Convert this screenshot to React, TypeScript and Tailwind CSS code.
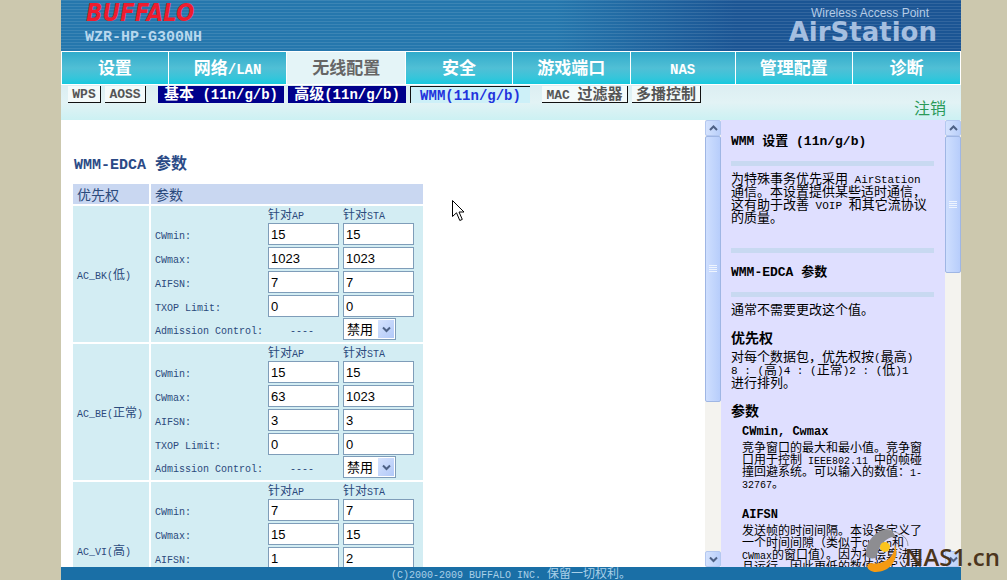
import React from "react";

const cjk = "font-['Noto_Sans_CJK_SC',sans-serif]";
const mono = "font-['Liberation_Mono','Noto_Sans_CJK_SC',monospace] leading-[0]";

function Mixed({ text, latin }: { text: string; latin: string }) {
  return (
    <>
      {text.split(/([\x20-\x7e]+)/).map((part, i) =>
        i % 2 === 1 ? (
          <span key={i} className={`${mono} ${latin} whitespace-pre`}>
            {part}
          </span>
        ) : (
          part
        ),
      )}
    </>
  );
}

function Lines({ lines, latin, className }: { lines: string[]; latin: string; className: string }) {
  return (
    <p className={`whitespace-nowrap ${className}`}>
      {lines.map((line) => (
        <span key={line} className="block">
          <Mixed text={line} latin={latin} />
        </span>
      ))}
    </p>
  );
}

const navItems = ["设置", "网络/LAN", "无线配置", "安全", "游戏端口", "NAS", "管理配置", "诊断"];

const plainTab =
  "border-b border-r border-[#111] bg-[#f4fafa] text-[#555]";
const navyTab = "bg-[#00008b] text-white";
const currentTab = "border-l border-t border-[#111] bg-[#cdf0f8] text-[#2233dd]";

const subTabs = [
  { text: "WPS", className: `w-[33px] text-[13px] ${plainTab}`, latin: "text-[13px]" },
  { text: "AOSS", className: `ml-1 w-[41px] text-[13px] ${plainTab}`, latin: "text-[13px]" },
  { text: "基本 (11n/g/b)", className: `ml-3 w-[126px] text-[15px] ${navyTab}`, latin: "text-[14px]" },
  { text: "高级(11n/g/b)", className: `ml-1 w-[118px] text-[15px] ${navyTab}`, latin: "text-[14px]" },
  { text: "WMM(11n/g/b)", className: `ml-1 w-[120px] text-[15px] ${currentTab}`, latin: "text-[14px]" },
  { text: "MAC 过滤器", className: `ml-3 w-[86px] text-[15px] ${plainTab}`, latin: "text-[13px]" },
  { text: "多播控制", className: `ml-1 w-[69px] text-[15px] ${plainTab}`, latin: "text-[13px]" },
];

const categories = [
  { id: "bk", name: "AC_BK(低)", rows: [["15", "15"], ["1023", "1023"], ["7", "7"], ["0", "0"]] },
  { id: "be", name: "AC_BE(正常)", rows: [["15", "15"], ["63", "1023"], ["3", "3"], ["0", "0"]] },
  { id: "vi", name: "AC_VI(高)", rows: [["7", "7"], ["15", "15"], ["1", "2"], ["0", "0"]] },
];
const params = ["CWmin:", "CWmax:", "AIFSN:", "TXOP Limit:"];

function Chevron({ up = false }: { up?: boolean }) {
  return (
    <svg width="9" height="7" viewBox="0 0 9 7" aria-hidden="true">
      <path
        d={up ? "M1 5 L4.5 1.5 L8 5" : "M1 1.5 L4.5 5 L8 1.5"}
        fill="none"
        stroke="#4d6185"
        strokeWidth="2"
      />
    </svg>
  );
}

function ScrollBar({ thumb }: { thumb: string }) {
  const end =
    "flex h-4 w-full shrink-0 items-center justify-center rounded-xs border border-[#b4c8f0] bg-linear-to-r from-[#d4e2fd] to-[#b9cffa]";
  return (
    <div className="flex w-4 shrink-0 flex-col bg-[#f4f3ef]">
      <button type="button" aria-label="向上滚动" className={end}>
        <Chevron up />
      </button>
      <div className="min-h-0 flex-1">
        <div
          className={`flex flex-col items-center justify-center gap-px rounded-xs border border-[#9fb6e4] bg-linear-to-r from-[#cfdffe] to-[#b7cdfb] ${thumb}`}
        >
          {[0, 1, 2, 3].map((n) => (
            <span key={n} className="h-px w-2 bg-[#eef4fe]" />
          ))}
        </div>
      </div>
      <button type="button" aria-label="向下滚动" className={end}>
        <Chevron />
      </button>
    </div>
  );
}

function Category({ id, name, rows }: { id: string; name: string; rows: string[][] }) {
  const field =
    "block h-[22px] w-[71px] border border-[#7f9db9] bg-white pl-0.5 font-['Liberation_Sans',sans-serif] text-[13px] text-black";
  return (
    <tr className="bg-[#d3edf3] text-[12px]">
      <th scope="row" className="whitespace-nowrap pl-1 text-left font-normal">
        <Mixed text={name} latin="text-[10px]" />
      </th>
      <td className="p-0 pb-0.5 pl-1 align-top">
        <table className="table-fixed border-separate border-spacing-0">
          <thead>
            <tr className="h-4 text-left leading-4">
              <td className="w-[113px] p-0" />
              <th className="w-[75px] p-0 font-normal">
                <Mixed text="针对AP" latin="text-[10px]" />
              </th>
              <th className="w-[75px] p-0 font-normal">
                <Mixed text="针对STA" latin="text-[10px]" />
              </th>
            </tr>
          </thead>
          <tbody>
            {params.map((label, i) => (
              <tr key={label} className="h-6">
                <td className="p-0">
                  <label htmlFor={`${id}-${i}-ap`} className="block leading-[14px]">
                    <Mixed text={label} latin="text-[10px]" />
                  </label>
                </td>
                <td className="p-0">
                  <input id={`${id}-${i}-ap`} className={field} defaultValue={rows[i][0]} />
                </td>
                <td className="p-0">
                  <input
                    aria-label={`${label} STA`}
                    className={field}
                    defaultValue={rows[i][1]}
                  />
                </td>
              </tr>
            ))}
            <tr>
              <td className="p-0">
                <label htmlFor={`${id}-adm`} className="block whitespace-nowrap leading-[14px]">
                  <Mixed text="Admission Control:" latin="text-[10px]" />
                </label>
              </td>
              <td className="p-0 pl-[22px] leading-[14px]">
                <Mixed text="----" latin="text-[10px]" />
              </td>
              <td className="p-0">
                <div className="relative h-[22px] w-[53px]">
                  <select
                    id={`${id}-adm`}
                    className="block h-full w-full appearance-none border border-[#7f9db9] bg-white pl-[3px] text-[13px] leading-5 text-black"
                  >
                    <option>禁用</option>
                    <option>启用</option>
                  </select>
                  <span className="pointer-events-none absolute right-0.5 top-0.5 flex h-[18px] w-4 items-center justify-center bg-linear-to-br from-[#d6e3fd] to-[#b2c9f8]">
                    <Chevron />
                  </span>
                </div>
              </td>
            </tr>
          </tbody>
        </table>
      </td>
    </tr>
  );
}

function Rule({ className }: { className: string }) {
  return <hr className={`h-[5px] border-0 bg-[#c8d9f1] ${className}`} />;
}

function Help() {
  return (
    <aside className="w-[224px] shrink-0 overflow-hidden bg-[#dfdfff] pl-2.5 pr-[11px] text-[13px] leading-[13px] text-black">
      <h2 className="mt-3 whitespace-nowrap font-bold leading-4">
        <Mixed text="WMM 设置 (11n/g/b)" latin="text-[13px]" />
      </h2>
      <Rule className="mt-[13px]" />
      <Lines
        className="mt-[5px]"
        latin="text-[11px]"
        lines={[
          "为特殊事务优先采用 AirStation",
          "通信。本设置提供某些适时通信，",
          "这有助于改善 VOIP 和其它流协议",
          "的质量。",
        ]}
      />
      <Rule className="mt-[25px]" />
      <h2 className="mt-2.5 font-bold leading-4">
        <Mixed text="WMM-EDCA 参数" latin="text-[13px]" />
      </h2>
      <Rule className="mt-[13px]" />
      <Lines className="mt-[5px]" latin="text-[11px]" lines={["通常不需要更改这个值。"]} />
      <h3 className="mt-3.5 text-[14px] font-bold leading-4">优先权</h3>
      <Lines
        className="mt-1"
        latin="text-[11px]"
        lines={["对每个数据包，优先权按(最高)", "8 : (高)4 : (正常)2 : (低)1", "进行排列。"]}
      />
      <h3 className="mt-3.5 text-[14px] font-bold leading-4">参数</h3>
      <div className="pl-[11px] text-[12px] leading-3">
        <h4 className="mt-1 font-bold leading-4">
          <Mixed text="CWmin, Cwmax" latin="text-[12px]" />
        </h4>
        <Lines
          className="mt-[3px]"
          latin="text-[10px]"
          lines={[
            "竞争窗口的最大和最小值。竞争窗",
            "口用于控制 IEEE802.11 中的帧碰",
            "撞回避系统。可以输入的数值：1-",
            "32767。",
          ]}
        />
        <h4 className="mt-4 font-bold leading-4">
          <Mixed text="AIFSN" latin="text-[12px]" />
        </h4>
        <Lines
          className="mt-[3px]"
          latin="text-[10px]"
          lines={[
            "发送帧的时间间隔。本设备定义了",
            "一个时间间隙（类似于CWmin和",
            "CWmax的窗口值）。因为补偿算法更",
            "且运行，因此更低的数值将定义更",
          ]}
        />
      </div>
    </aside>
  );
}

function Watermark() {
  return (
    <div className="pointer-events-none absolute bottom-[7px] right-[7px] flex items-end">
      <svg width="44" height="44" viewBox="0 0 44 44" aria-hidden="true">
        <path d="M1 27 C0 14 9 2 22 0 C27 1 29 4 31 8 C22 7 14 15 11 29 C6 30 3 29 1 27 Z" fill="#8d8d91" />
        <path d="M22 0.5 C33 4 43 6 43 17" fill="none" stroke="#9b9ba0" />
        <path d="M30 15 C35 29 26 43 11 43 C4 43 -1 37 5 34 C14 36 30 32 30 15 Z" fill="#f59a12" />
        <circle cx="20" cy="18" r="5" fill="#fbc41c" />
      </svg>
      <span className="-ml-1 font-['Open_Sans',sans-serif] text-[24px] font-semibold leading-8 text-[#4b351d]">
        NAS1.cn
      </span>
    </div>
  );
}

export default function App() {
  return (
    <div className={`relative flex h-screen overflow-hidden bg-[#ccc8ae] pl-[61px] pr-[46px] ${cjk}`}>
      <div className="flex min-w-0 flex-1 flex-col bg-white">
        <header className="flex h-[51px] shrink-0 justify-between bg-[repeating-linear-gradient(to_bottom,rgba(255,255,255,0.1)_0px,rgba(255,255,255,0.1)_1px,transparent_1px,transparent_3px),linear-gradient(to_right,#2577ad,#2577ad_55%,#1b5594_75%,#1b5594)] pl-6 pr-6">
          <div>
            <div className="h-[27px] pl-px font-['DejaVu_Sans_Condensed','DejaVu_Sans',sans-serif] text-[24px] font-bold italic leading-[27px] text-[#ee1c2e]">
              BUFFALO
            </div>
            <div className="mt-[3px] font-['Liberation_Mono',monospace] text-[15px] font-bold leading-4 text-[#b8d8ee]">
              WZR-HP-G300NH
            </div>
          </div>
          <div className="pt-1.5 text-right text-[#b4cbe6]">
            <div className="pr-2 font-['Liberation_Sans',sans-serif] text-[12px] leading-[14px]">
              Wireless Access Point
            </div>
            <div className="font-['DejaVu_Sans',sans-serif] text-[26px] font-bold leading-6 text-[#a5bfe0]">
              AirStation
            </div>
          </div>
        </header>

        <nav className="grid shrink-0 grid-cols-[106fr_118fr_118fr_106fr_117fr_104fr_117fr_107fr] gap-px border border-white bg-white text-[17px] font-bold">
          {navItems.map((item) => (
            <a
              key={item}
              href="#"
              className={
                item === "无线配置"
                  ? "h-8 bg-[#e4f4f7] text-center leading-[30px] text-[#666]"
                  : "h-8 bg-linear-to-b from-[#30abcb] via-[#50bfd5] to-[#12c9de] text-center leading-[30px] text-white"
              }
            >
              <Mixed text={item} latin="text-[14px]" />
            </a>
          ))}
        </nav>

        <div className="flex h-[35px] shrink-0 justify-between bg-linear-to-b from-[#dceef2] via-[#e2f3f5] to-[#ccf1f3] pl-[7px] pr-[15px]">
          <div className="flex items-start pt-px font-bold">
            {subTabs.map((tab) => (
              <a
                key={tab.text}
                href="#"
                className={`h-[17px] shrink-0 whitespace-nowrap text-center leading-[13px] ${tab.className}`}
              >
                <Mixed text={tab.text} latin={tab.latin} />
              </a>
            ))}
          </div>
          <a href="#" className="pt-3 text-[16px] leading-5 text-[#2a9a58]">
            注销
          </a>
        </div>

        <div className="flex min-h-0 flex-1">
          <main className="min-w-0 flex-1 overflow-hidden pl-2.5 text-[#2b4a7c]">
            <h1 className="mt-8 pl-[3px] text-[16px] font-bold leading-5 text-[#2b4a86]">
              <Mixed text="WMM-EDCA 参数" latin="text-[15px]" />
            </h1>
            <table className="mt-2.5 w-[354px] table-fixed border-separate border-spacing-0.5">
              <thead>
                <tr className="h-5 bg-[#c9d7f1] text-left text-[14px] leading-[18px]">
                  <th className="w-[76px] p-0 pl-1 font-normal">优先权</th>
                  <th className="p-0 pl-1 font-normal">参数</th>
                </tr>
              </thead>
              <tbody>
                {categories.map((c) => (
                  <Category key={c.id} {...c} />
                ))}
              </tbody>
            </table>
          </main>
          <ScrollBar thumb="h-[64%]" />
          <Help />
          <ScrollBar thumb="h-[33%]" />
        </div>

        <footer className="h-[13px] shrink-0 whitespace-nowrap bg-[#1a6fa6] text-center text-[12px] leading-[11px] text-[#a9d0e8]">
          <Mixed text="(C)2000-2009 BUFFALO INC. 保留一切权利。" latin="text-[10px]" />
        </footer>
      </div>

      <svg
        className="pointer-events-none absolute left-[452px] top-[200px]"
        width="13"
        height="22"
        viewBox="0 0 13 22"
        aria-hidden="true"
      >
        <path
          d="M0.5 0.5 V16.5 L4.5 12.8 L7.8 20.5 L10.3 19.4 L7 12 H12 Z"
          fill="#fff"
          stroke="#000"
        />
      </svg>
      <Watermark />
    </div>
  );
}
